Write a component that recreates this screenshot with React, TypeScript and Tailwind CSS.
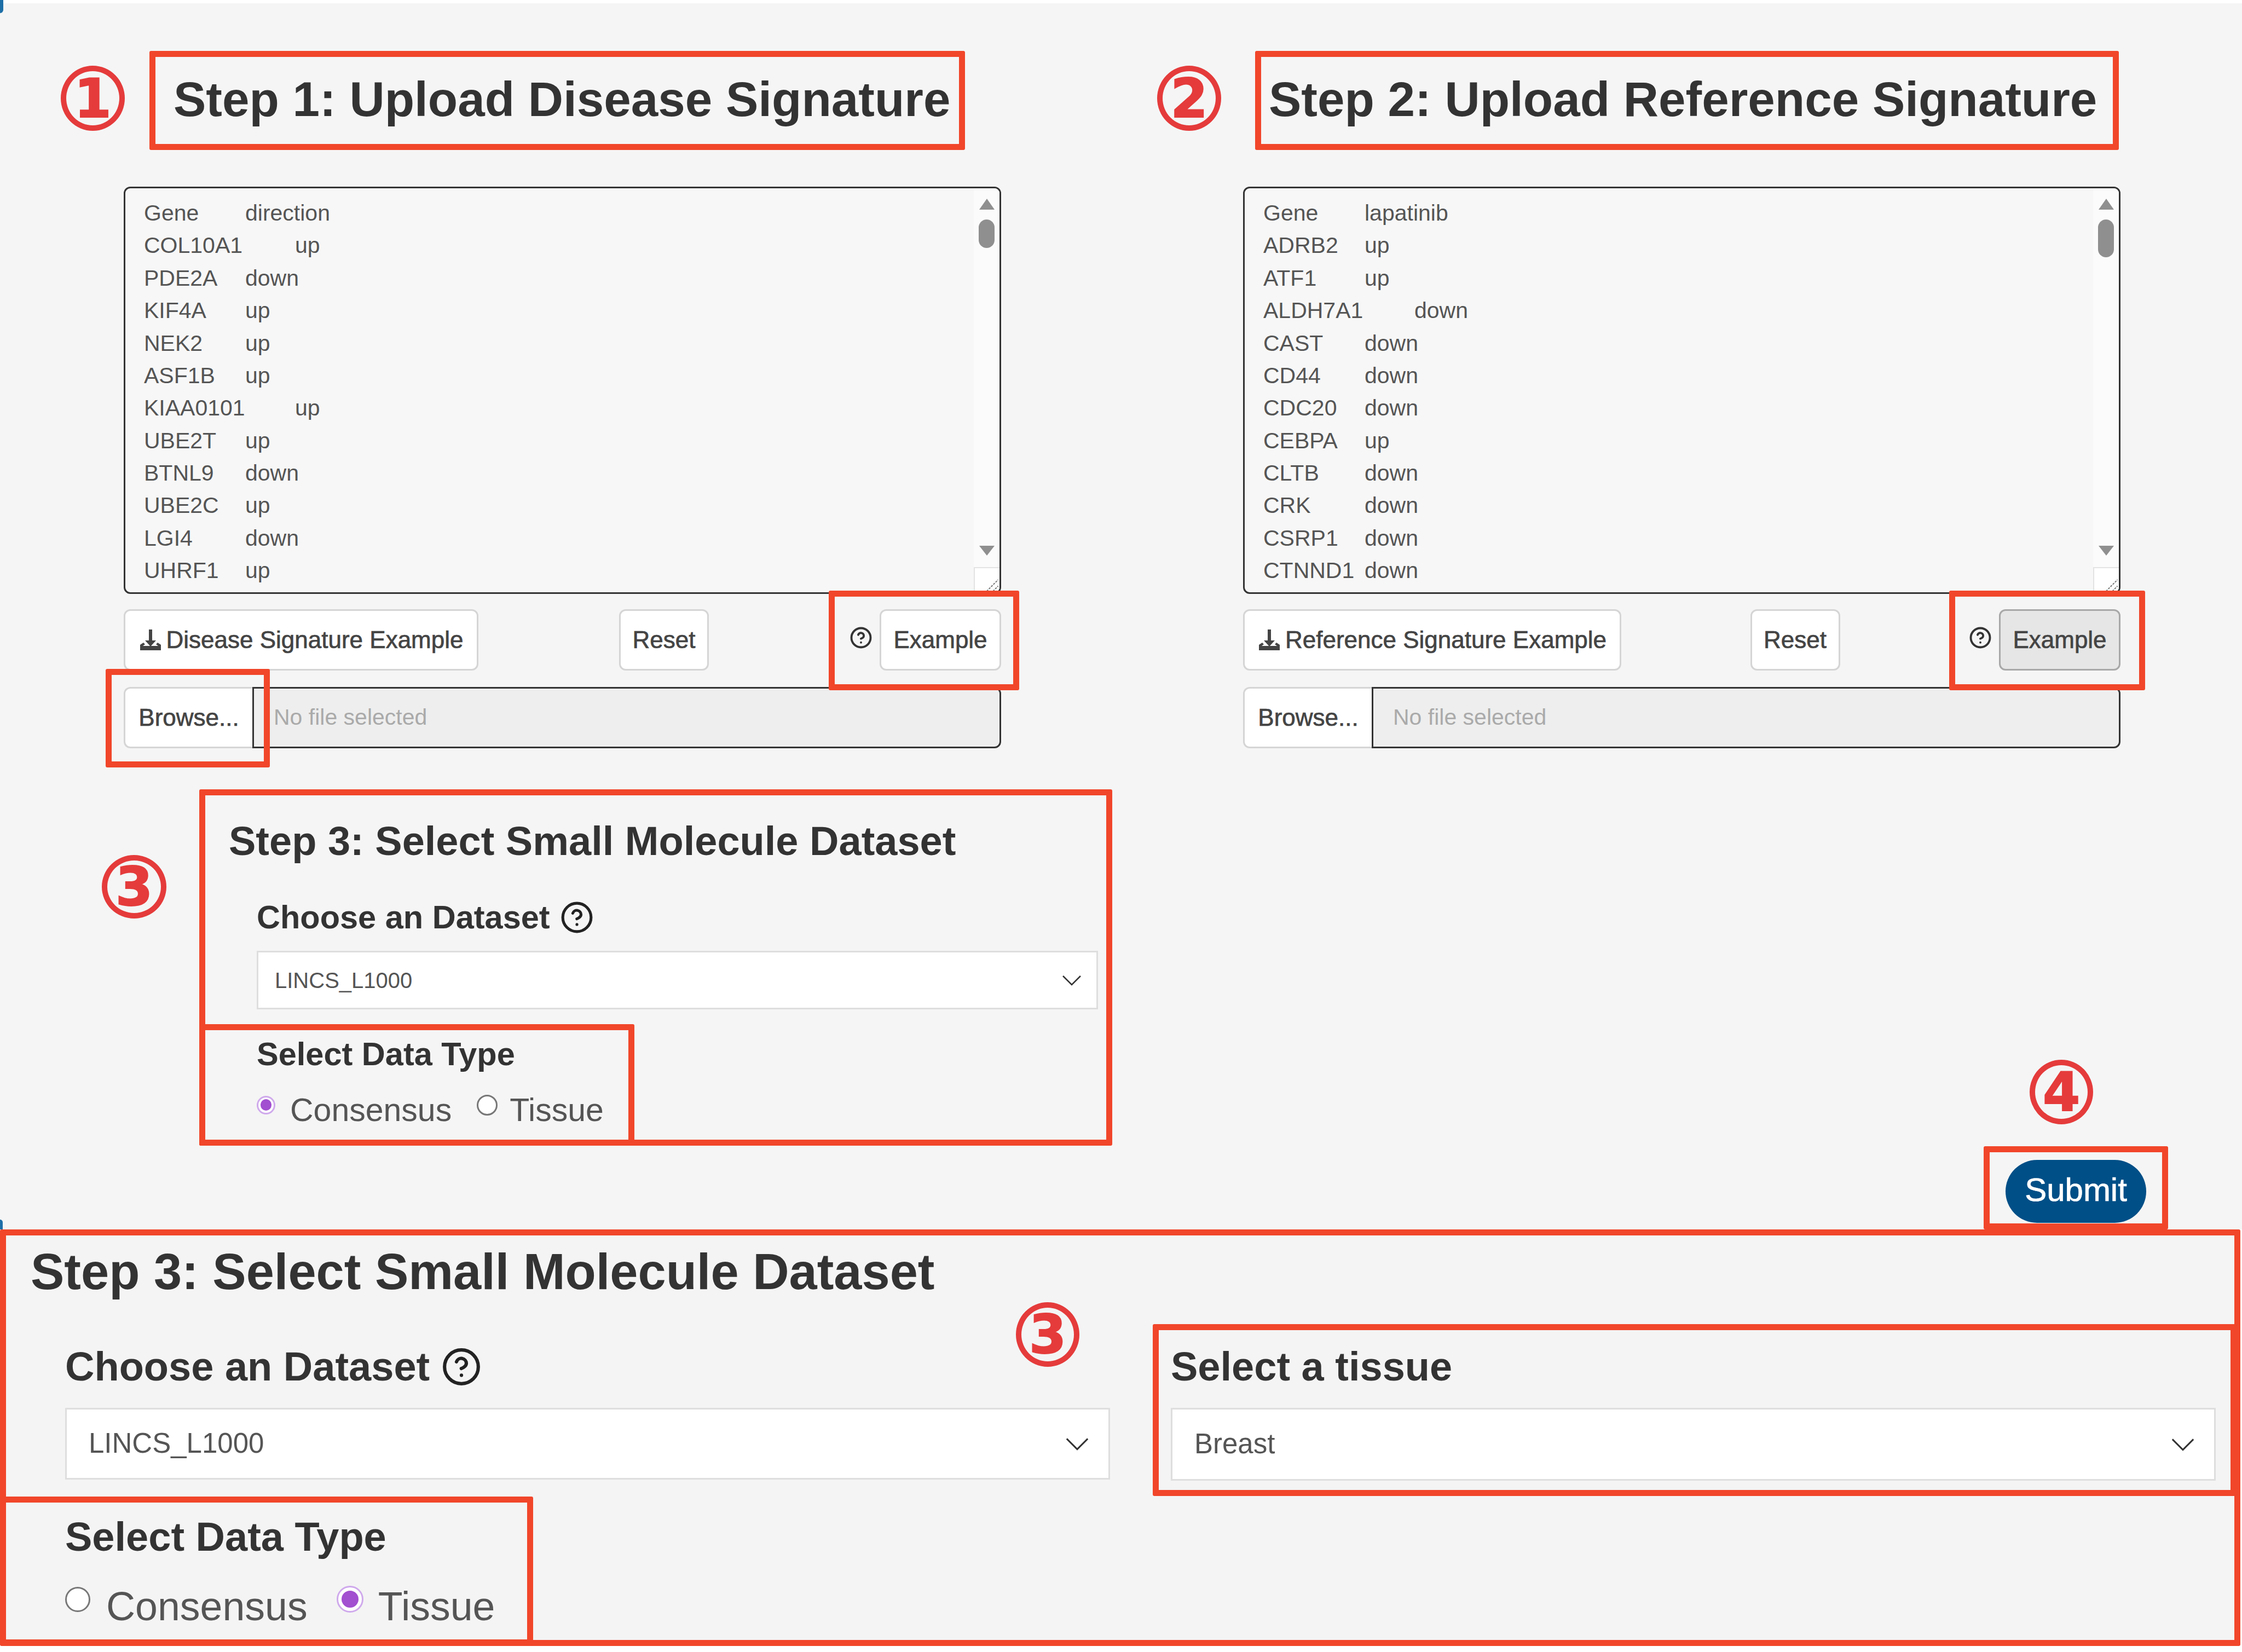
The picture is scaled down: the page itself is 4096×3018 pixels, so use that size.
import { CircleHelp } from "lucide-react";

const diseaseRows = [
  ["Gene", "direction"],
  ["COL10A1", "up"],
  ["PDE2A", "down"],
  ["KIF4A", "up"],
  ["NEK2", "up"],
  ["ASF1B", "up"],
  ["KIAA0101", "up"],
  ["UBE2T", "up"],
  ["BTNL9", "down"],
  ["UBE2C", "up"],
  ["LGI4", "down"],
  ["UHRF1", "up"],
];

const referenceRows = [
  ["Gene", "lapatinib"],
  ["ADRB2", "up"],
  ["ATF1", "up"],
  ["ALDH7A1", "down"],
  ["CAST", "down"],
  ["CD44", "down"],
  ["CDC20", "down"],
  ["CEBPA", "up"],
  ["CLTB", "down"],
  ["CRK", "down"],
  ["CSRP1", "down"],
  ["CTNND1", "down"],
];

const btnText = "text-[44px] text-[#444] [-webkit-text-stroke:0.7px_#444]";
const labelText = "font-bold text-[#333] leading-none";

const DownloadIcon = () => (
  <svg viewBox="0 0 42 42" className="w-[42px] h-[42px] shrink-0 fill-[#444]">
    <path d="M18 2h6v20h7L21 33 11 22h7z" />
    <path d="M2 30l6-4 3 3-4 3h28l-4-3 3-3 6 4v10H2z" />
  </svg>
);

const Chevron = ({ className }: { className: string }) => (
  <svg viewBox="0 0 36 20" className={className} fill="none" stroke="#333" strokeWidth="2.5">
    <path d="M2 2l16 16L34 2" />
  </svg>
);

const Marker = ({ digit, className }: { digit: string; className: string }) => (
  <div
    className={`absolute flex items-center justify-center rounded-[50%] border-[10px] border-[#e53b3b] text-[#e53b3b] font-bold font-['DejaVu_Sans',sans-serif] text-[98px] leading-none [-webkit-text-stroke:2px_#e53b3b] ${className}`}
  >
    {digit}
  </div>
);

const Frame = ({ className }: { className: string }) => (
  <div className={`absolute border-[11px] border-[#f1462a] rounded-[3px] ${className}`} />
);

const GeneList = ({ rows, thumb }: { rows: string[][]; thumb: string }) => (
  <div className="relative h-[744px] rounded-[12px] border-[3px] border-[#333] bg-[#f7f7f7] pt-[16px] pl-[34px] overflow-hidden">
    {rows.map((row) => (
      <div key={row[0]} className="flex h-[59.4px] items-center text-[41px] text-[#555]">
        <span className={row[0].length >= 7 ? "w-[276px]" : "w-[185px]"}>{row[0]}</span>
        <span>{row[1]}</span>
      </div>
    ))}
    <div className="absolute top-0 right-0 bottom-0 w-[47px] bg-[#fbfbfb] flex flex-col items-center">
      <div className="mt-[19px] w-0 h-0 border-x-[14px] border-x-transparent border-b-[20px] border-b-[#8f8f8f]" />
      <div className={`mt-[18px] w-[29px] rounded-full bg-[#8f8f8f] ${thumb}`} />
      <div className="mt-auto mb-[67px] w-0 h-0 border-x-[14px] border-x-transparent border-t-[18px] border-t-[#8f8f8f]" />
    </div>
    <div className="absolute right-0 bottom-0 w-[47px] h-[46px] bg-white border-l-[2px] border-t-[2px] border-[#e3e3e3] overflow-hidden">
      <svg viewBox="0 0 46 46" className="w-full h-full" stroke="#777" strokeWidth="2" strokeDasharray="4 2">
        <path d="M22 44L44 22M34 44L44 34" />
      </svg>
    </div>
  </div>
);

const SignatureColumn = (props: {
  title: string;
  frameClass: string;
  rows: string[][];
  thumb: string;
  exampleLabel: string;
  exampleWidth: string;
  exampleClass: string;
}) => (
  <div className="w-[1603px]">
    <div className={`h-[181px] border-[11px] border-[#f1462a] rounded-[3px] flex items-center ${props.frameClass}`}>
      <h1 className="-mt-[4px] text-[89px] font-bold text-[#333] leading-none whitespace-nowrap">{props.title}</h1>
    </div>
    <div className="mt-[67px]">
      <GeneList rows={props.rows} thumb={props.thumb} />
    </div>
    <div className="mt-[28px] h-[112px] flex items-center justify-between">
      <button className={`h-full ${props.exampleWidth} rounded-[12px] border-[3px] border-[#d5d5d5] bg-white flex items-center justify-center gap-[8px] whitespace-nowrap ${btnText}`}>
        <DownloadIcon />
        {props.exampleLabel}
      </button>
      <button className={`h-full w-[164px] rounded-[12px] border-[3px] border-[#d5d5d5] bg-white ${btnText}`}>
        Reset
      </button>
      <div className="h-full flex items-center gap-[13px]">
        <CircleHelp size={42} strokeWidth={2.2} color="#333" className="-mt-[8px]" />
        <button className={`h-full w-[222px] rounded-[12px] border-[3px] ${props.exampleClass} ${btnText}`}>
          Example
        </button>
      </div>
    </div>
    <div className="mt-[30px] h-[112px] flex">
      <button className={`w-[235px] shrink-0 rounded-l-[12px] border-[3px] border-r-0 border-[#d5d5d5] bg-white ${btnText} text-[#333]`}>
        Browse...
      </button>
      <div className="flex-1 rounded-r-[12px] border-[3px] border-[#333] bg-[#eeeeee] flex items-center pl-[36px] text-[41px] text-[#aaa]">
        No file selected
      </div>
    </div>
  </div>
);

const Radio = ({ checked, size }: { checked: boolean; size: string }) => (
  <span
    className={`shrink-0 rounded-full flex items-center justify-center ${size} ${
      checked ? "border-[3px] border-[#cfa9ec] bg-white" : "border-[3px] border-[#777] bg-white"
    }`}
  >
    {checked && <span className="w-[72%] h-[72%] rounded-full bg-[#a24fd0]" />}
  </span>
);

const SelectBox = (props: { value: string; className: string; textClass: string; chevron: string }) => (
  <div className={`border-[3px] border-[#dedede] bg-white flex items-center justify-between ${props.className}`}>
    <span className={props.textClass}>{props.value}</span>
    <Chevron className={props.chevron} />
  </div>
);

export default function App() {
  return (
    <div className="relative w-[4096px] h-[3018px] overflow-hidden bg-white font-['Liberation_Sans',sans-serif]">
      <div className="mt-[6px] h-[2240px] bg-[#f5f5f5] inline-block w-full align-top pt-[87px]">
        <div className="flex pl-[226px] gap-[442px]">
          <SignatureColumn
            title="Step 1: Upload Disease Signature"
            frameClass="ml-[47px] w-[1490px] pl-[33px]"
            rows={diseaseRows}
            thumb="h-[52px]"
            exampleLabel="Disease Signature Example"
            exampleWidth="w-[648px]"
            exampleClass="border-[#d5d5d5] bg-white"
          />
          <SignatureColumn
            title="Step 2: Upload Reference Signature"
            frameClass="ml-[22px] w-[1578px] pl-[14px]"
            rows={referenceRows}
            thumb="h-[69px]"
            exampleLabel="Reference Signature Example"
            exampleWidth="w-[691px]"
            exampleClass="border-[#a8a8a8] bg-[#e6e6e6]"
          />
        </div>

        <div className="mt-[75px] ml-[364px] w-[1668px] h-[651px] border-[11px] border-[#f1462a] rounded-[3px] pt-[44px] pl-[43px]">
          <h2 className="text-[74px] font-bold text-[#333] leading-[80px] whitespace-nowrap">
            Step 3: Select Small Molecule Dataset
          </h2>
          <div className="ml-[51px] mt-[69px] h-[60px] flex items-center gap-[18px]">
            <span className={`text-[59.5px] ${labelText}`}>Choose an Dataset</span>
            <CircleHelp size={62} strokeWidth={2} color="#222" />
          </div>
          <SelectBox
            value="LINCS_L1000"
            className="ml-[51px] mt-[31px] w-[1537px] h-[107px] pl-[30px] pr-[27px]"
            textClass="text-[40px] text-[#555]"
            chevron="w-[36px] h-[20px]"
          />
          <div className="-ml-[54px] mt-[27px] w-[795px] h-[222px] border-[11px] border-[#f1462a] rounded-[3px] pt-[14px] pl-[94px]">
            <div className={`h-[60px] flex items-center text-[59.5px] ${labelText}`}>Select Data Type</div>
            <div className="mt-[43px] flex items-center text-[59px] text-[#555] leading-none">
              <span className="-mt-[20px]"><Radio checked size="w-[34px] h-[34px]" /></span>
              <span className="ml-[27px]">Consensus</span>
              <span className="ml-[46px] -mt-[20px]"><Radio checked={false} size="w-[38px] h-[38px]" /></span>
              <span className="ml-[22px]">Tissue</span>
            </div>
          </div>
        </div>

        <div className="mt-[1px] flex justify-end pr-[135px]">
          <div className="w-[337px] h-[152px] border-[11px] border-[#f1462a] rounded-[3px] flex items-center justify-center">
            <button className="w-[257px] h-[115px] mt-[12px] pb-[4px] rounded-full bg-[#004f87] text-white text-[60px] [-webkit-text-stroke:0.7px_white]">
              Submit
            </button>
          </div>
        </div>
      </div>

      <div className="h-[761px] border-[11px] border-[#f1462a] rounded-[3px] bg-[#f4f4f4] mr-[3px]">
        <h2 className="mt-[16px] pl-[45px] text-[92px] font-bold text-[#333] leading-[100px] whitespace-nowrap">
          Step 3: Select Small Molecule Dataset
        </h2>
        <div className="mt-[46px] flex">
          <div className="ml-[108px] w-[1909px] pt-[42px] shrink-0">
            <div className="h-[72px] flex items-center gap-[21px]">
              <span className={`text-[74px] ${labelText}`}>Choose an Dataset</span>
              <CircleHelp size={74} strokeWidth={2} color="#222" />
            </div>
            <SelectBox
              value="LINCS_L1000"
              className="mt-[39px] h-[131px] pl-[40px] pr-[34px]"
              textClass="text-[51px] text-[#555]"
              chevron="w-[46px] h-[24px]"
            />
          </div>
          <div className="ml-[78px] w-[1980px] h-[314px] shrink-0 border-[11px] border-[#f1462a] rounded-[3px] pl-[22px] pt-[31px]">
            <div className={`h-[72px] flex items-center text-[74px] ${labelText}`}>Select a tissue</div>
            <SelectBox
              value="Breast"
              className="mt-[39px] w-[1909px] h-[133px] pl-[40px] pr-[34px]"
              textClass="text-[51px] text-[#555]"
              chevron="w-[46px] h-[24px]"
            />
          </div>
        </div>
        <div className="-ml-[11px] mt-[1px] w-[974px] h-[272px] border-[11px] border-[#f1462a] rounded-[3px] pl-[108px] pt-[27px]">
          <div className={`h-[72px] flex items-center text-[74px] ${labelText}`}>Select Data Type</div>
          <div className="mt-[54px] flex items-center text-[73.5px] text-[#555] leading-none">
            <span className="-mt-[26px]"><Radio checked={false} size="w-[46px] h-[46px]" /></span>
            <span className="ml-[29px]">Consensus</span>
            <span className="ml-[53px] -mt-[26px]"><Radio checked size="w-[49px] h-[49px]" /></span>
            <span className="ml-[27px]">Tissue</span>
          </div>
        </div>
      </div>

      {/* annotation overlays, in page coordinates */}
      <Frame className="left-[1514px] top-[1079px] w-[348px] h-[182px]" />
      <Frame className="left-[3561px] top-[1079px] w-[358px] h-[182px]" />
      <Frame className="left-[193px] top-[1222px] w-[300px] h-[180px]" />
      <Marker digit="1" className="left-[111px] top-[120px] w-[117px] h-[119px]" />
      <Marker digit="2" className="left-[2114px] top-[120px] w-[117px] h-[119px]" />
      <Marker digit="3" className="left-[186px] top-[1562px] w-[118px] h-[116px]" />
      <Marker digit="4" className="left-[3708px] top-[1936px] w-[116px] h-[118px]" />
      <Marker digit="3" className="left-[1856px] top-[2379px] w-[116px] h-[118px]" />
      <div className="absolute left-0 top-0 w-[6px] h-[24px] bg-[#1e6fa8] rounded-br-full" />
      <div className="absolute left-0 top-[2228px] w-[5px] h-[18px] bg-[#1e6fa8] rounded-tr-full" />
    </div>
  );
}
